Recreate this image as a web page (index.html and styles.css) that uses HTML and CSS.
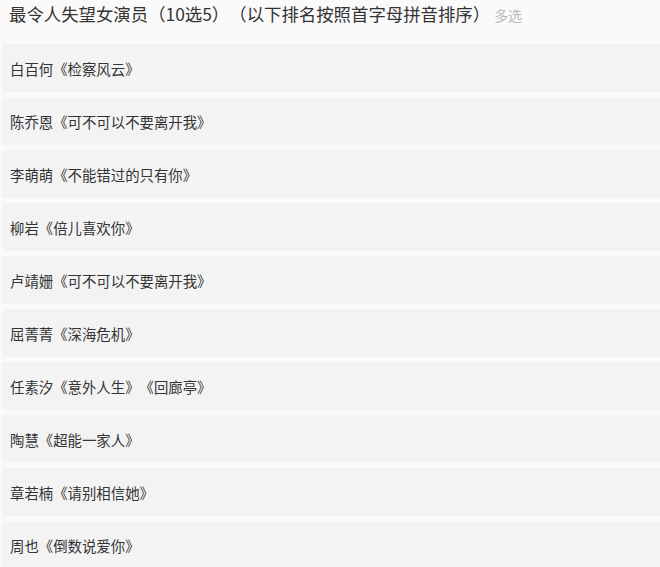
FILE: index.html
```html
<!DOCTYPE html>
<html lang="zh-CN">
<head>
<meta charset="utf-8">
<link rel="stylesheet" href="styles.css">
</head>
<body>
<div class="poll">
  <div class="title">最令人失望女演员（10选5）（以下排名按照首字母拼音排序）<span class="tag">多选</span></div>
  <ul class="options">
    <li class="option">白百何《检察风云》</li>
    <li class="option">陈乔恩《可不可以不要离开我》</li>
    <li class="option">李萌萌《不能错过的只有你》</li>
    <li class="option">柳岩《倍儿喜欢你》</li>
    <li class="option">卢靖姗《可不可以不要离开我》</li>
    <li class="option">屈菁菁《深海危机》</li>
    <li class="option">任素汐《意外人生》《回廊亭》</li>
    <li class="option">陶慧《超能一家人》</li>
    <li class="option">章若楠《请别相信她》</li>
    <li class="option">周也《倒数说爱你》</li>
  </ul>
</div>
</body>
</html>
```
FILE: styles.css
```css
html, body {
  margin: 0;
  padding: 0;
  background: #fafafa;
}
body {
  font-family: "Microsoft YaHei", "Noto Sans CJK SC", "Noto Sans", sans-serif;
  color: #333;
  width: 660px;
  height: 567px;
  overflow: hidden;
  text-spacing-trim: space-all;
}
.poll {
  padding-top: 2px;
}
.title {
  font-size: 17.4px;
  line-height: 24px;
  padding-left: 9px;
  height: 38px;
  color: #333;
}
.tag {
  font-size: 14px;
  color: #bbb;
  margin-left: 4px;
}
.options {
  list-style: none;
  margin: 4px 0 0 2px;
  padding: 0;
  display: flex;
  flex-direction: column;
  gap: 5px;
}
.option {
  background: #f3f3f3;
  height: 48px;
  display: flex;
  align-items: center;
  padding-left: 8px;
  font-size: 14.4px;
  color: #333;
}
```
